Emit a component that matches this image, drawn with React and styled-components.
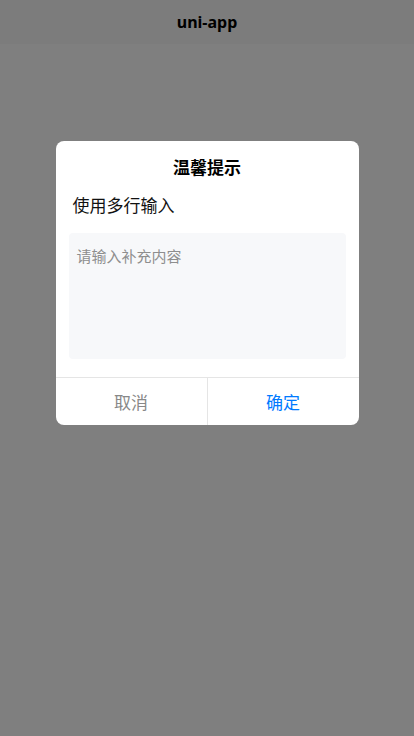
import React, { useState } from "react";
import styled, { createGlobalStyle } from "styled-components";

const GlobalStyle = createGlobalStyle`
  html, body {
    margin: 0;
    padding: 0;
    background: #ffffff;
  }
  body {
    font-family: "Noto Sans", "Noto Sans CJK SC", sans-serif;
  }
`;

const Page = styled.div`
  position: relative;
  width: 414px;
  height: 736px;
  background: #ffffff;
  overflow: hidden;
`;

const NavBar = styled.div`
  height: 44px;
  background: #f8f8f8;
  display: flex;
  align-items: center;
  justify-content: center;
  font-size: 16px;
  font-weight: 700;
  color: #000000;
`;

const Mask = styled.div`
  position: absolute;
  inset: 0;
  background: rgba(0, 0, 0, 0.5);
  display: flex;
  flex-direction: column;
  align-items: center;
  padding-top: 141px;
  box-sizing: border-box;
`;

const Modal = styled.div`
  width: 303px;
  background: #ffffff;
  border-radius: 8px;
  overflow: hidden;
  display: flex;
  flex-direction: column;
`;

const Title = styled.div`
  padding-top: 16px;
  line-height: 22px;
  font-size: 17px;
  font-weight: 700;
  color: #000000;
  text-align: center;
`;

const Body = styled.div`
  padding: 15px 13px 18px;
  display: flex;
  flex-direction: column;
  gap: 15px;
`;

const Label = styled.div`
  padding-left: 4px;
  font-size: 17px;
  line-height: 24px;
  color: #111111;
`;

const TextArea = styled.textarea`
  display: block;
  width: 100%;
  height: 126px;
  box-sizing: border-box;
  border: none;
  outline: none;
  resize: none;
  border-radius: 4px;
  background: #f7f8fa;
  padding: 12px 8px;
  font-family: "Noto Sans", "Noto Sans CJK SC", sans-serif;
  font-size: 15px;
  line-height: 22px;
  color: #333333;

  &::placeholder {
    color: #8e8e8e;
  }
`;

const Footer = styled.div`
  display: flex;
  border-top: 1px solid #e5e5e5;
  height: 47px;
`;

const FooterButton = styled.div`
  flex: 1;
  display: flex;
  align-items: center;
  justify-content: center;
  font-size: 17px;
  color: ${(p) => (p.$primary ? "#007aff" : "#888888")};
  & + & {
    border-left: 1px solid #e5e5e5;
  }
`;

export default function App() {
  const [text, setText] = useState("");

  return (
    <>
      <GlobalStyle />
      <Page>
        <NavBar>uni-app</NavBar>
        <Mask>
          <Modal>
            <Title>温馨提示</Title>
            <Body>
              <Label>使用多行输入</Label>
              <TextArea
                placeholder="请输入补充内容"
                value={text}
                onChange={(e) => setText(e.target.value)}
              />
            </Body>
            <Footer>
              <FooterButton>取消</FooterButton>
              <FooterButton $primary>确定</FooterButton>
            </Footer>
          </Modal>
        </Mask>
      </Page>
    </>
  );
}
